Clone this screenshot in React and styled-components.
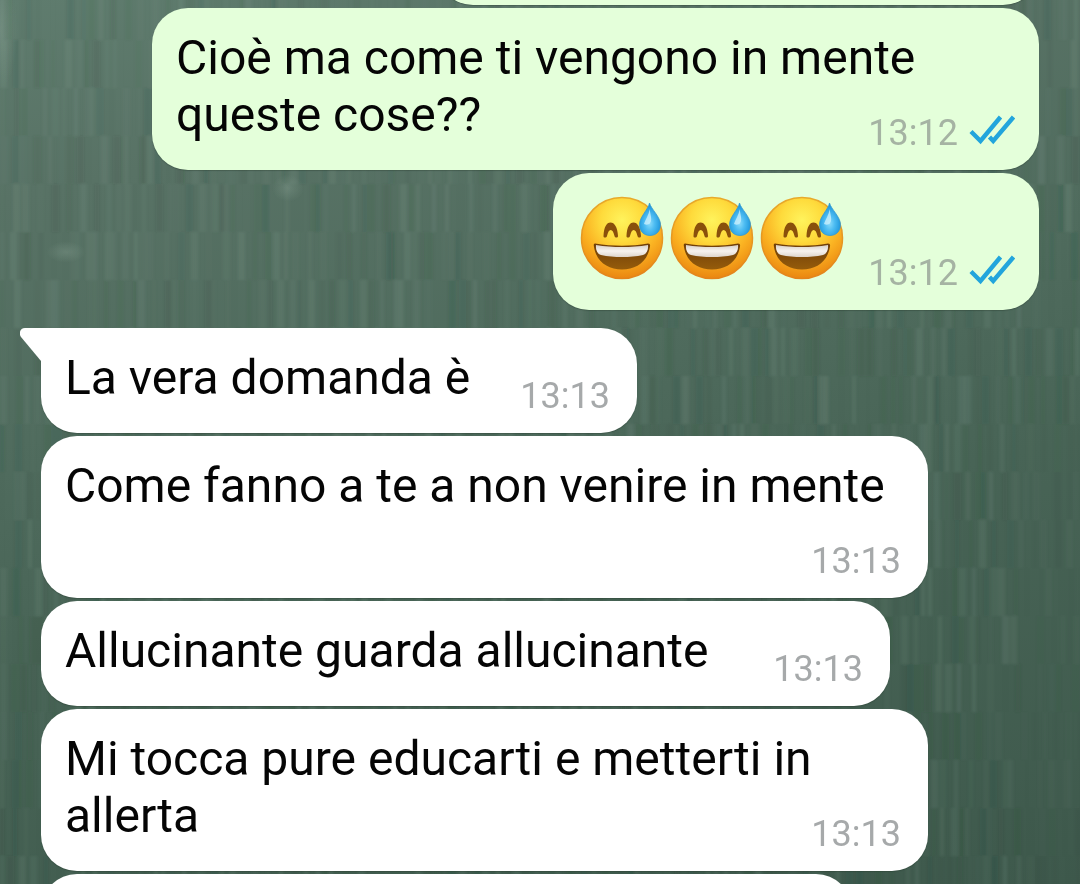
import React from "react";
import styled, { createGlobalStyle } from "styled-components";

const GlobalStyle = createGlobalStyle`
  *, *::before, *::after { box-sizing: border-box; }
  html, body, #root { height: 100%; }
  body {
    margin: 0;
    overflow: hidden;
    background: #4a6557;
    font-family: Roboto, "Noto Sans", sans-serif;
  }
`;

const Screen = styled.div`
  position: relative;
  height: 100vh;
  overflow: hidden;
  background: linear-gradient(168deg, #5f7c6e 0%, #587265 18%, #506c5e 40%, #486456 60%, #3e594c 100%);
`;

const Wallpaper = styled.svg`
  position: absolute;
  inset: 0;
  width: 100%;
  height: 100%;
`;

const Thread = styled.main`
  position: relative;
  display: flex;
  flex-direction: column;
  padding: 0 41px;
`;

const Group = styled.section`
  display: flex;
  flex-direction: column;
  align-items: ${(p) => (p.$outgoing ? "flex-end" : "flex-start")};
  gap: 3px;
  margin-top: ${(p) => (p.$outgoing ? "-99px" : "18px")};
`;

const Bubble = styled.article`
  position: relative;
  width: ${(p) => p.$width}px;
  max-width: 89%;
  min-height: 104px;
  padding: 21px 24px 27px;
  border-radius: 36px;
  ${(p) => p.$tail && "border-top-left-radius: 0;"}
  background: ${(p) => (p.$outgoing ? "#e4ffda" : "#ffffff")};
  box-shadow: 0 1px 1px rgba(30, 50, 38, 0.3);
`;

const Tail = styled.svg`
  position: absolute;
  top: 0;
  left: -21px;
  width: 22px;
  height: 33px;
`;

const Message = styled.div`
  display: flow-root;
  color: #050505;
  font-size: 48px;
  line-height: 57px;
`;

const Meta = styled.span`
  float: right;
  display: flex;
  align-items: center;
  align-self: flex-end;
  gap: 10px;
  margin: 26px ${(p) => (p.$outgoing ? 0 : 3)}px -11px 24px;
  color: ${(p) => (p.$outgoing ? "#a5b3a3" : "#a6a9aa")};
  font-size: 36px;
  line-height: 42px;
`;

const Ticks = styled.svg`
  width: 47px;
  height: 34px;
  margin-bottom: 6px;
`;

const EmojiMessage = styled.div`
  display: flex;
  justify-content: space-between;
  height: 89px;
  padding-left: 3px;
`;

const EmojiRow = styled.div`
  display: flex;
  gap: 6px;
`;

const Emoji = styled.svg`
  width: 84px;
  height: 84px;
  margin-top: 2px;
`;

function makeStreaks() {
  let seed = 29;
  const rand = () => {
    seed = (seed * 16807) % 2147483647;
    return seed / 2147483647;
  };
  const out = [];
  for (let row = 0; row < 24; row += 1) {
    const y = row * 48 - 8;
    let x = 0;
    while (x < 2000) {
      const fade = x > 1020 && row > 8 ? 0.3 : 1;
      out.push({
        x: Math.round(x),
        y,
        w: rand() > 0.5 ? 7 : 4,
        light: rand() > 0.5,
        o: rand() * 0.14 * fade,
      });
      x += 5 + rand() * 11;
    }
  }
  return out;
}

const streaks = makeStreaks();

function Texture() {
  return (
    <Wallpaper aria-hidden="true">
      <defs>
        <filter id="soften" x="0" y="0" width="100%" height="100%">
          <feGaussianBlur stdDeviation="1.8 1" />
        </filter>
        <radialGradient id="glow">
          <stop offset="0" stopColor="#8aa395" stopOpacity=".35" />
          <stop offset="1" stopColor="#8aa395" stopOpacity="0" />
        </radialGradient>
      </defs>
      <g filter="url(#soften)">
        {streaks.map((s, i) => (
          <rect
            key={i}
            x={s.x}
            y={s.y}
            width={s.w}
            height="48"
            fill={s.light ? "#93ad9f" : "#24402f"}
            opacity={s.o}
          />
        ))}
      </g>
      <ellipse cx="66" cy="252" rx="20" ry="11" fill="url(#glow)" />
      <ellipse cx="288" cy="188" rx="16" ry="14" fill="url(#glow)" />
      <ellipse cx="0" cy="30" rx="18" ry="60" fill="url(#glow)" />
    </Wallpaper>
  );
}

function SweatSmile() {
  return (
    <Emoji viewBox="0 0 84 84" role="img" aria-label="😅">
      <defs>
        <radialGradient id="face" cx=".5" cy=".28" r=".72">
          <stop offset="0" stopColor="#fff35c" />
          <stop offset=".36" stopColor="#fedb3c" />
          <stop offset=".68" stopColor="#fab021" />
          <stop offset="1" stopColor="#ea8610" />
        </radialGradient>
        <linearGradient id="rim" x1="0" y1="0" x2="0" y2="1">
          <stop offset="0" stopColor="#e8aa2a" />
          <stop offset="1" stopColor="#e4831a" />
        </linearGradient>
        <linearGradient id="mouth" x1="0" y1="0" x2="0" y2="1">
          <stop offset="0" stopColor="#6e3d08" />
          <stop offset="1" stopColor="#955c0b" />
        </linearGradient>
        <linearGradient id="teeth" x1="0" y1="0" x2="0" y2="1">
          <stop offset="0" stopColor="#d8d0c8" />
          <stop offset=".5" stopColor="#f7f3ef" />
          <stop offset="1" stopColor="#ddd5cc" />
        </linearGradient>
        <radialGradient id="drop" cx=".48" cy=".62" r=".6">
          <stop offset="0" stopColor="#8cdcfb" />
          <stop offset=".4" stopColor="#4dbcf2" />
          <stop offset="1" stopColor="#168fd7" />
        </radialGradient>
      </defs>
      <circle cx="42" cy="42" r="40.500" fill="url(#face)" stroke="url(#rim)" strokeWidth="1.500" />
      <path d="M23.500 40C24 31 26.500 26.500 30.500 26.500S37.500 31 38 40C38 42 35 42 34.500 40 33.500 36 32.500 34 30.700 34S28 36 27 40C26.500 42 23.300 42 23.500 40ZM46.500 40C47 31 49.500 26.500 53.500 26.500S60.500 31 61 40C61 42 58 42 57.500 40 56.500 36 55.500 34 53.700 34S51 36 50 40C49.500 42 46.300 42 46.500 40Z" fill="#8a500b" />
      <path d="M15 47.500c18 3 36 3 53 0 2 0 2.300 1.300 2 3C67.500 66 56 73.500 42 73.500S16.500 66 14 51c-.4-2-.5-3.200 1-3.500Z" fill="url(#mouth)" />
      <path d="M16 49c17 2.800 35 2.800 52 0 .5 5-1.500 9-5 10-13 2.700-29 2.700-42 0-3.500-1-5.500-5-5-10Z" fill="url(#teeth)" />
      <path d="M69.500 7c1.500 6 11 14 11 21.500C80.500 35.500 76 39.500 70 39.500s-10.500-4-10.500-11C59.500 21 68.500 13 69.500 7Z" fill="url(#drop)" stroke="#369bd0" strokeWidth=".8" />
      <path d="M69.500 13c-.5 6-4 10-5.500 15 4 2 8 0 7-7-.3-3-1-5-1.500-8Z" fill="#c9effd" opacity=".8" />
    </Emoji>
  );
}

function MetaLine({ time, outgoing }) {
  return (
    <Meta $outgoing={outgoing}>
      <time>{time}</time>
      {outgoing && (
        <Ticks viewBox="0 0 47 34" role="img" aria-label="Letto">
          <path d="M3 18.500 12.500 28 32.500 4M21.500 24l3.700 4L45.500 4" fill="none" stroke="#22a5dc" strokeWidth="4.400" />
        </Ticks>
      )}
    </Meta>
  );
}

function TextBubble({ text, time, width, outgoing, tail }) {
  return (
    <Bubble $width={width} $outgoing={outgoing} $tail={tail}>
      {tail && (
        <Tail viewBox="0 0 22 33" aria-hidden="true">
          <path d="M22 0H5C0 0-1.500 5 1 9L21 33H22Z" fill="#fff" />
        </Tail>
      )}
      <Message>
        <span>{text}</span>
        <MetaLine time={time} outgoing={outgoing} />
      </Message>
    </Bubble>
  );
}

export default function App() {
  return (
    <>
      <GlobalStyle />
      <Screen>
        <Texture />
        <Thread>
          <Group $outgoing>
            <Bubble $width={602} $outgoing />
            <TextBubble outgoing width={887} time="13:12" text="Cioè ma come ti vengono in mente queste cose??" />
            <Bubble $width={486} $outgoing>
              <EmojiMessage>
                <EmojiRow>
                  <SweatSmile />
                  <SweatSmile />
                  <SweatSmile />
                </EmojiRow>
                <MetaLine time="13:12" outgoing />
              </EmojiMessage>
            </Bubble>
          </Group>
          <Group>
            <TextBubble tail width={596} time="13:13" text="La vera domanda è" />
            <TextBubble width={887} time="13:13" text="Come fanno a te a non venire in mente" />
            <TextBubble width={849} time="13:13" text="Allucinante guarda allucinante" />
            <TextBubble width={887} time="13:13" text="Mi tocca pure educarti e metterti in allerta" />
            <Bubble $width={811} />
          </Group>
        </Thread>
      </Screen>
    </>
  );
}
